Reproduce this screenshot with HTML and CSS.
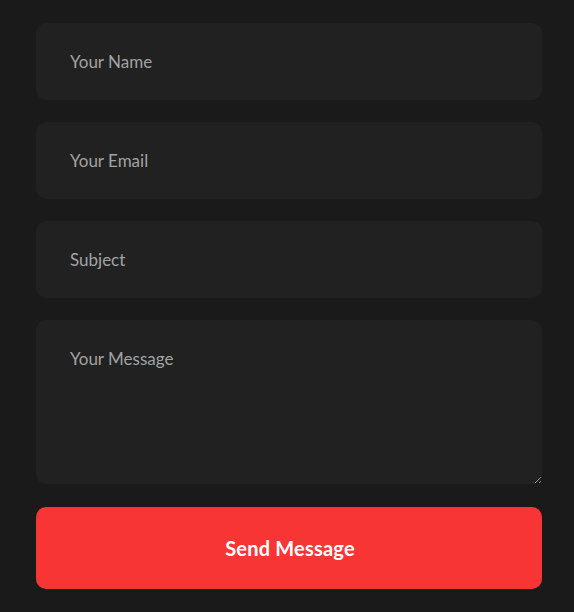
FILE: index.html
```html
<!DOCTYPE html>
<html lang="en">
<head>
    <meta charset="UTF-8">
    <title>Contact</title>
    <link rel="stylesheet" href="styles.css">
</head>
<body>

    <form class="contact-form" onsubmit="return false">
        <input class="field" type="text" placeholder="Your Name">
        <input class="field" type="email" placeholder="Your Email">
        <input class="field" type="text" placeholder="Subject">
        <textarea class="field message" placeholder="Your Message"></textarea>
        <button class="btn" type="submit">Send Message</button>
    </form>

</body>
</html>
```

FILE: styles.css
```css
body {
    font-family: "Lato", "Open Sans", sans-serif;
    background: #1a1a1a;
    margin: 0;
    padding: 23px 32px 0 36px;
}
.contact-form {
    display: flex;
    flex-direction: column;
    gap: 22px;
}
.field {
    box-sizing: border-box;
    width: 100%;
    height: 77px;
    padding: 0 34px;
    background: #212121;
    border: none;
    border-radius: 10px;
    color: #ddd;
    font-family: inherit;
    font-size: 17px;
    outline: none;
}
.field::placeholder {
    color: #a3a3a3;
}
.message {
    height: 164px;
    padding-top: 28px;
    resize: vertical;
}
.btn {
    height: 82px;
    margin-top: 1px;
    padding-left: 8px;
    background: #f73535;
    color: #fff;
    border: none;
    border-radius: 10px;
    font-family: inherit;
    font-size: 20px;
    font-weight: 700;
    letter-spacing: 0.2px;
    cursor: pointer;
}
.btn:hover {
    background: #e52b2b;
}
```
